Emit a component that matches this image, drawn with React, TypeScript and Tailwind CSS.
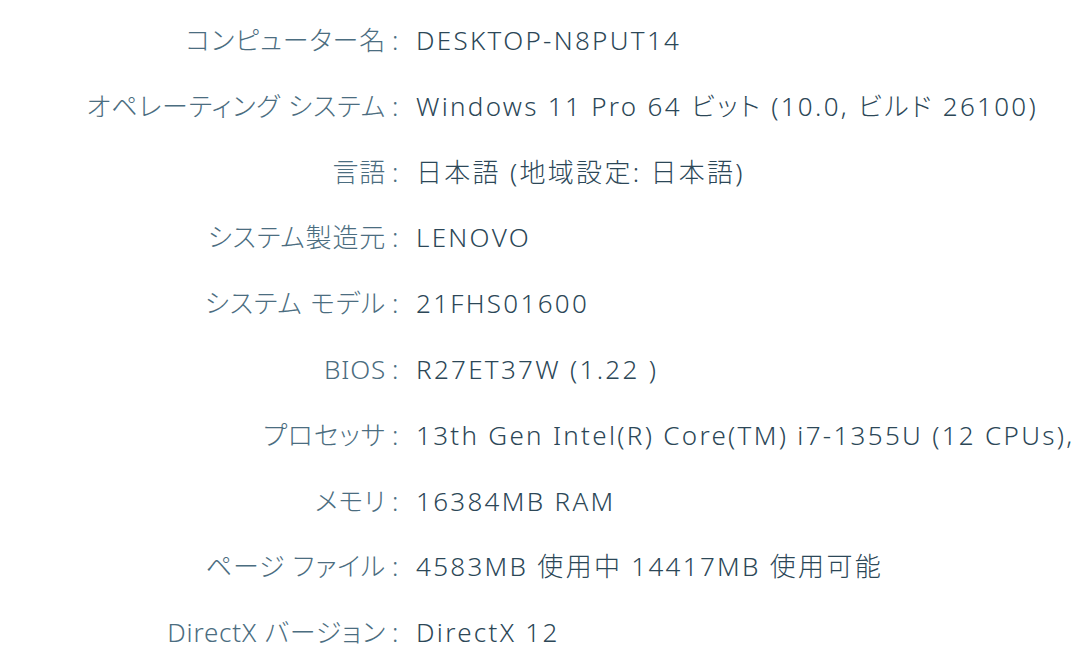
import React from 'react';

interface InfoRow {
  label: string;
  value: string;
}

const rows: InfoRow[] = [
  { label: 'コンピューター名', value: 'DESKTOP-N8PUT14' },
  { label: 'オペレーティング システム', value: 'Windows 11 Pro 64 ビット (10.0, ビルド 26100)' },
  { label: '言語', value: '日本語 (地域設定: 日本語)' },
  { label: 'システム製造元', value: 'LENOVO' },
  { label: 'システム モデル', value: '21FHS01600' },
  { label: 'BIOS', value: 'R27ET37W (1.22 )' },
  { label: 'プロセッサ', value: '13th Gen Intel(R) Core(TM) i7-1355U (12 CPUs),' },
  { label: 'メモリ', value: '16384MB RAM' },
  { label: 'ページ ファイル', value: '4583MB 使用中 14417MB 使用可能' },
  { label: 'DirectX バージョン', value: 'DirectX 12' },
];

const App: React.FC = () => {
  return (
    <div
      className="w-[1080px] h-[648px] overflow-hidden bg-white pt-[25px] flex flex-col gap-[35.8px] [font-feature-settings:'palt']"
      style={{ fontFamily: '"Noto Sans", "Noto Sans CJK JP", sans-serif' }}
    >
      {rows.map((row) => (
        <div key={row.label} className="grid grid-cols-[386px_30px_1fr] h-[30px] items-center text-[26px] leading-[30px] whitespace-nowrap">
          <div className="text-right text-[#4b6d80] font-light tracking-[0.8px]">{row.label}</div>
          <div className="pl-[6px] text-[#4b6d80] font-light">:</div>
          <div className="text-[#2c4757] font-light tracking-[2.3px]">{row.value}</div>
        </div>
      ))}
    </div>
  );
};

export default App;
